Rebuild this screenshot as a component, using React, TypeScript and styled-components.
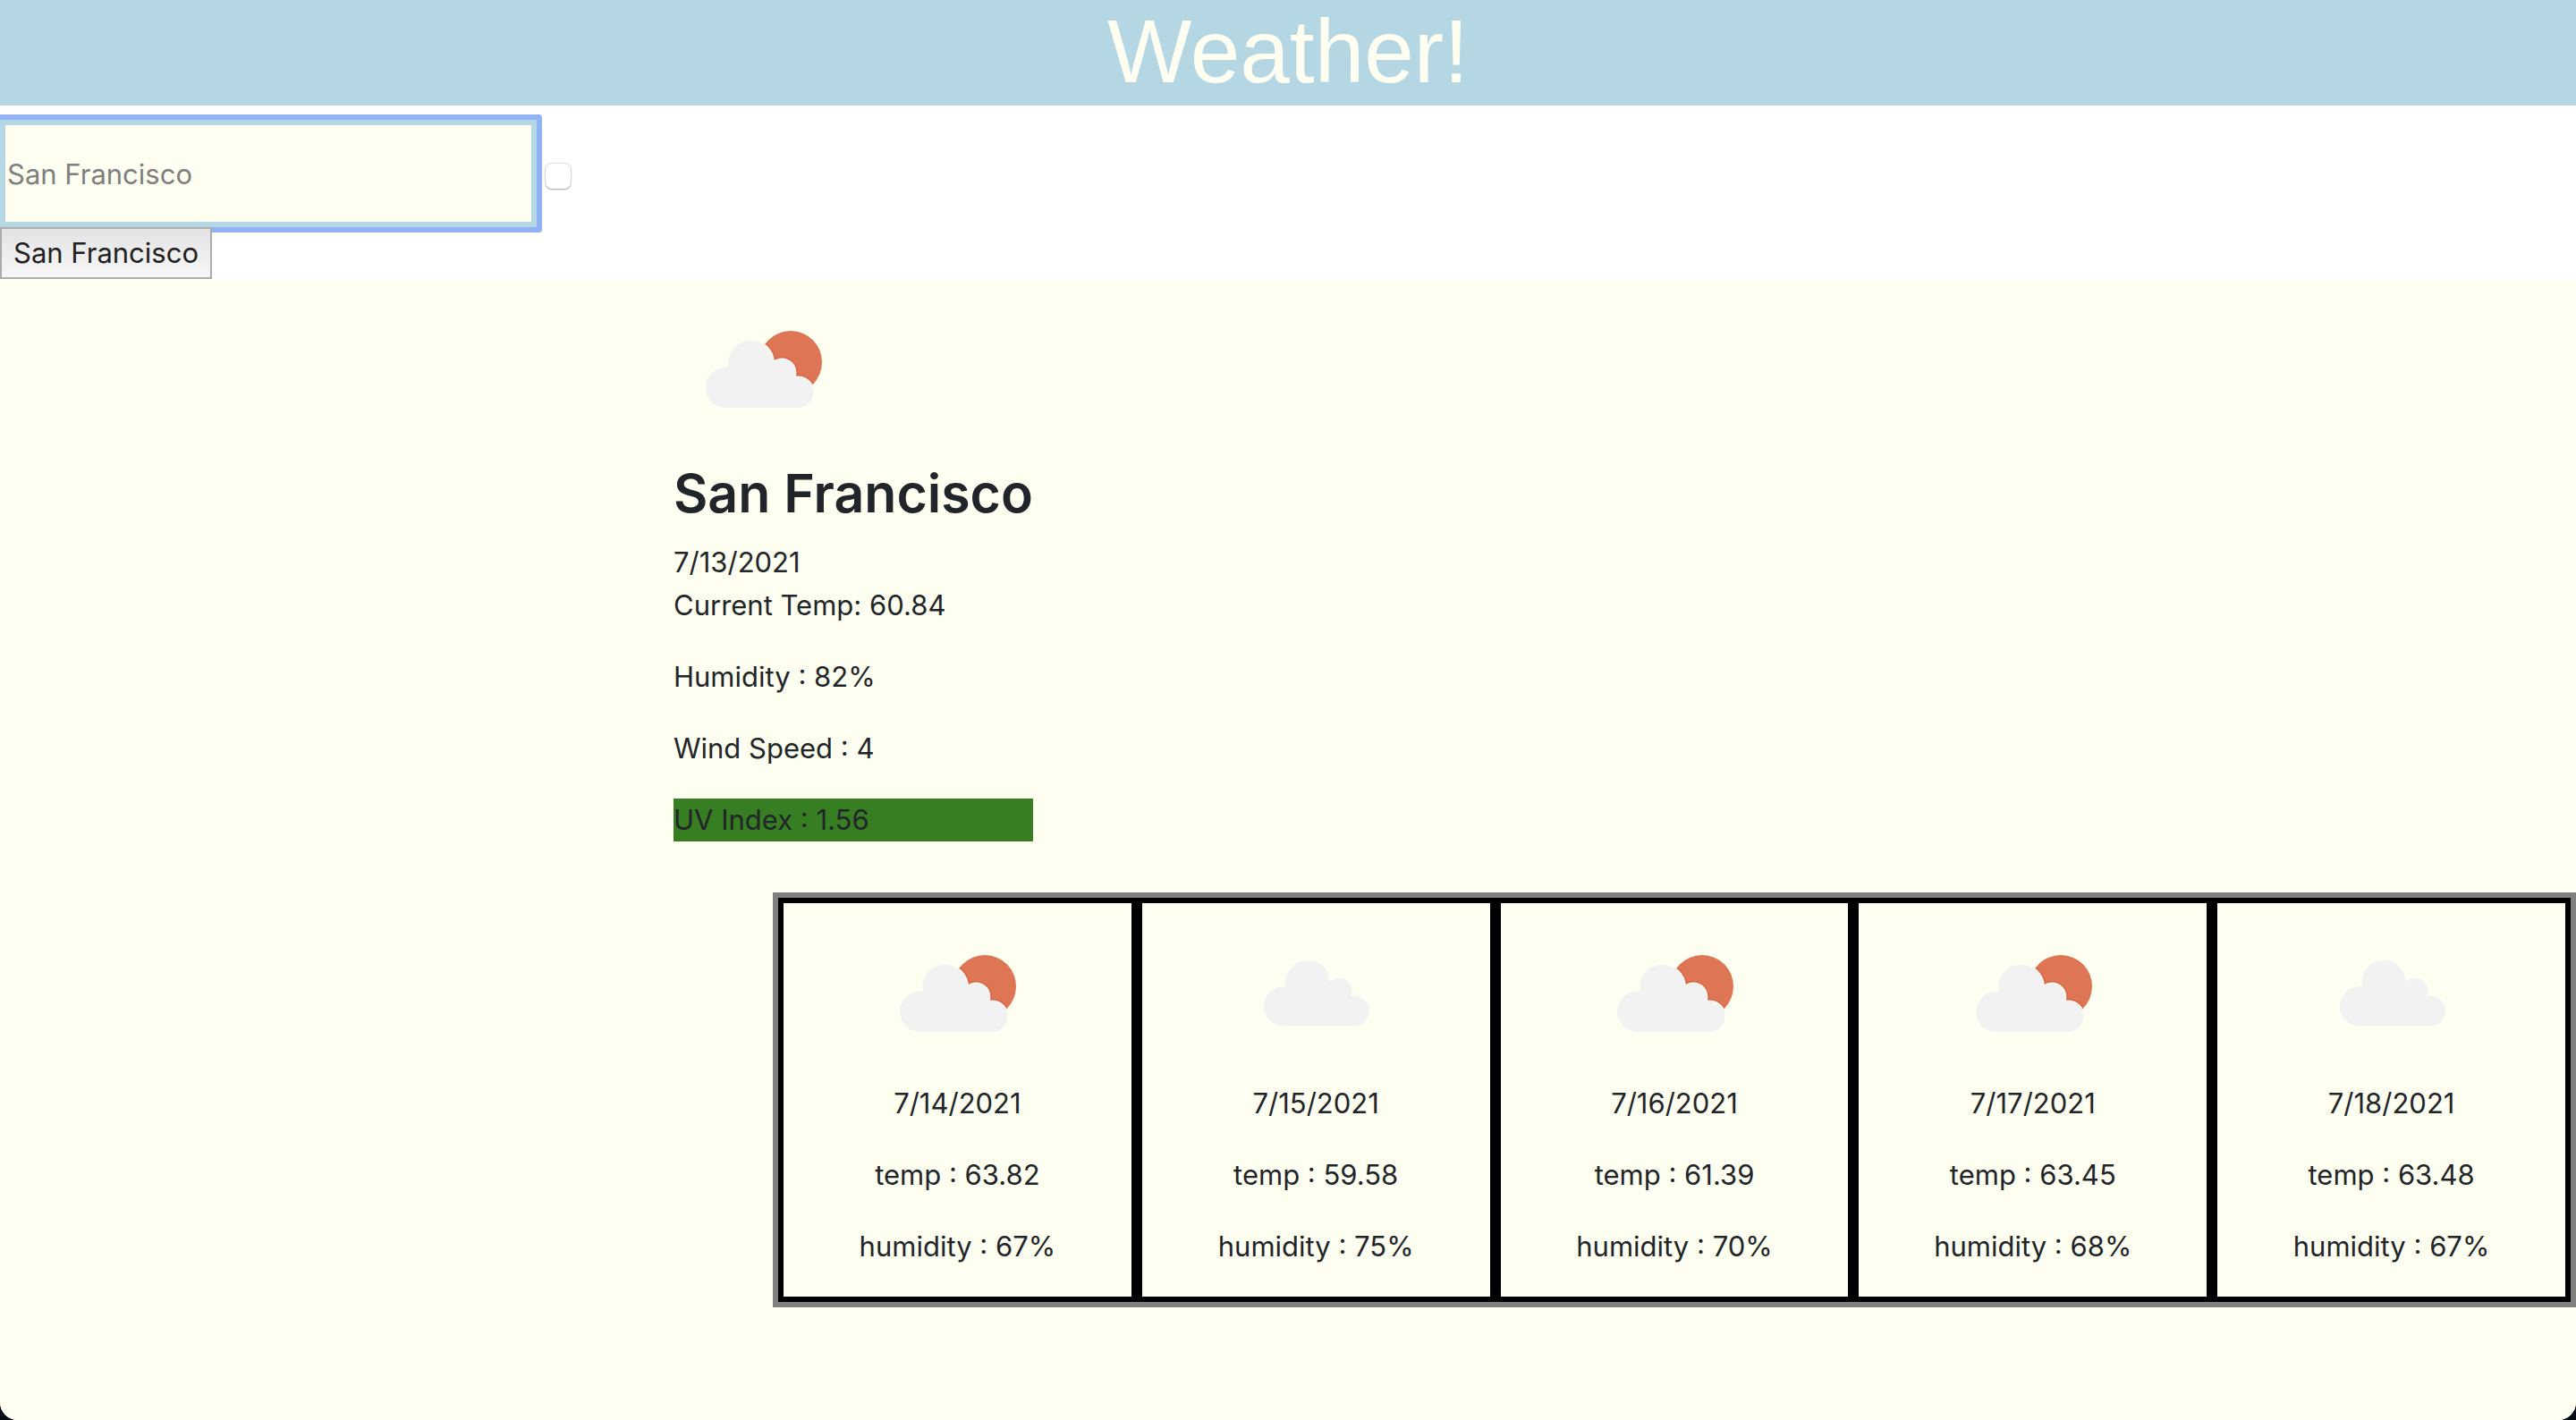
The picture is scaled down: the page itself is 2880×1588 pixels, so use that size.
import React from "react";
import styled, { createGlobalStyle } from "styled-components";

const GlobalStyle = createGlobalStyle`
  *, *::before, *::after {
    box-sizing: border-box;
  }
  html {
    background: #070d16;
  }
  body {
    margin: 0;
    color: #212529;
    font-family: Inter, "Liberation Sans", sans-serif;
    font-size: 31px;
    line-height: 48px;
  }
`;

const Page = styled.div`
  display: flex;
  flex-direction: column;
  min-height: 100vh;
  background: #ffffff;
  border-radius: 0 0 20px 20px;
  overflow: hidden;
`;

const Banner = styled.h1`
  margin: 0;
  padding-bottom: 3px;
  background: #b4d7e3;
  color: #fffff1;
  font-family: "Liberation Sans", Arial, sans-serif;
  font-size: 100px;
  font-weight: 400;
  line-height: 115px;
  text-align: center;
`;

const SearchArea = styled.section`
  padding-top: 16px;
`;

const SearchForm = styled.form`
  display: flex;
  align-items: center;
  gap: 10px;
`;

const CityInput = styled.input`
  width: 600px;
  height: 120px;
  padding: 2px;
  border: 6px solid #b4d7e3;
  border-radius: 1px;
  outline: none;
  background: #fffff1;
  box-shadow: 0 0 0 6px #91b3f5;
  color: #212529;
  font: inherit;

  &::placeholder {
    color: #7f7f7f;
    opacity: 1;
  }
`;

const SubmitButton = styled.button`
  width: 28px;
  height: 28px;
  margin-top: 6px;
  padding: 0;
  border: 0;
  border-radius: 7px;
  background: #ffffff;
  box-shadow: 0 0 1px 1px rgba(0, 0, 0, 0.1), 0 1px 2px rgba(0, 0, 0, 0.3);
`;

const HistoryButton = styled.button`
  position: relative;
  display: block;
  height: 58px;
  padding: 0 13px;
  border: 2px solid #acacac;
  background: linear-gradient(#e3e3e3, #f7f7f7);
  color: #212121;
  font: inherit;
`;

const Results = styled.main`
  flex: 1;
  background: #fffff1;
`;

const Current = styled.section`
  width: fit-content;
  margin-left: 753px;
`;

const CityName = styled.h2`
  margin: 0 0 14px;
  font-size: 59px;
  font-weight: 600;
  line-height: 79px;
`;

const Reading = styled.p<{ $tight?: boolean; $uv?: boolean }>`
  margin: 0 0 ${(p) => (p.$tight ? 0 : 32)}px;
  background: ${(p) => (p.$uv ? "#377e22" : "transparent")};
`;

const Forecast = styled.section`
  display: grid;
  grid-template-columns: repeat(5, 1fr);
  width: 70%;
  margin-top: 57px;
  margin-left: auto;
  border: 6px solid #808080;
`;

const DayCard = styled.article`
  border: 6px solid #000000;
  text-align: center;
`;

const WeatherIcon = styled.svg`
  display: block;
  width: 200px;
  height: 200px;
`;

const CardIcon = styled.div`
  display: flex;
  justify-content: center;
`;

const sunCloudPuffs = [
  { cx: 58.7, cy: 121.4, r: 22.6 },
  { cx: 86.4, cy: 94, r: 25.2 },
  { cx: 121.3, cy: 104.6, r: 14.7 },
  { cx: 139.2, cy: 126.9, r: 17.1 },
];

const cloudPuffs = [
  { cx: 63.9, cy: 115.3, r: 22 },
  { cx: 91.1, cy: 88.4, r: 24.7 },
  { cx: 126.1, cy: 98.1, r: 14.4 },
  { cx: 143, cy: 120.5, r: 16.8 },
];

type Sky = "sun" | "cloud";

function SkyIcon({ sky, id }: { sky: Sky; id: string }) {
  if (sky === "cloud") {
    return (
      <WeatherIcon viewBox="0 0 200 200" role="img" aria-label="Cloudy">
        <g fill="#f2f2f2">
          {cloudPuffs.map((c) => (
            <circle key={c.cx} {...c} />
          ))}
          <path d="M63.9 93.3 H126 V110 H143 V137.3 H63.9 Z" />
        </g>
      </WeatherIcon>
    );
  }
  return (
    <WeatherIcon viewBox="0 0 200 200" role="img" aria-label="Partly cloudy">
      <clipPath id={id}>
        <circle cx="131" cy="93" r="35" />
      </clipPath>
      <circle cx="131" cy="93" r="35" fill="#de7554" />
      <g clipPath={`url(#${id})`}>
        <g fill="#dd6742">
          {sunCloudPuffs.map((c) => (
            <circle key={c.cx} cx={c.cx} cy={c.cy} r={c.r + 3} />
          ))}
        </g>
        <g fill="#f6f9fa">
          {sunCloudPuffs.map((c) => (
            <circle key={c.cx} cx={c.cx} cy={c.cy} r={c.r + 1.4} />
          ))}
        </g>
      </g>
      <g fill="#f2f2f2">
        {sunCloudPuffs.map((c) => (
          <circle key={c.cx} {...c} />
        ))}
        <path d="M58.7 98.8 H121 V118 H139.2 V144 H58.7 Z" />
      </g>
    </WeatherIcon>
  );
}

const days: { date: string; sky: Sky; temp: string; humidity: number }[] = [
  { date: "7/14/2021", sky: "sun", temp: "63.82", humidity: 67 },
  { date: "7/15/2021", sky: "cloud", temp: "59.58", humidity: 75 },
  { date: "7/16/2021", sky: "sun", temp: "61.39", humidity: 70 },
  { date: "7/17/2021", sky: "sun", temp: "63.45", humidity: 68 },
  { date: "7/18/2021", sky: "cloud", temp: "63.48", humidity: 67 },
];

export default function App() {
  return (
    <>
      <GlobalStyle />
      <Page>
        <Banner>Weather!</Banner>
        <SearchArea>
          <SearchForm onSubmit={(e) => e.preventDefault()}>
            <CityInput type="text" aria-label="City" placeholder="San Francisco" />
            <SubmitButton type="submit" aria-label="Search" />
          </SearchForm>
          <HistoryButton type="button">San Francisco</HistoryButton>
        </SearchArea>
        <Results>
          <Current>
            <SkyIcon sky="sun" id="sun-current" />
            <CityName>San Francisco</CityName>
            <Reading $tight>7/13/2021</Reading>
            <Reading>Current Temp: 60.84</Reading>
            <Reading>Humidity : 82%</Reading>
            <Reading>Wind Speed : 4</Reading>
            <Reading $uv>UV Index : 1.56</Reading>
          </Current>
          <Forecast>
            {days.map((day) => (
              <DayCard key={day.date}>
                <CardIcon>
                  <SkyIcon sky={day.sky} id={`sun-${day.date.replace(/\//g, "-")}`} />
                </CardIcon>
                <Reading>{day.date}</Reading>
                <Reading>temp : {day.temp}</Reading>
                <Reading>humidity : {day.humidity}%</Reading>
              </DayCard>
            ))}
          </Forecast>
        </Results>
      </Page>
    </>
  );
}
